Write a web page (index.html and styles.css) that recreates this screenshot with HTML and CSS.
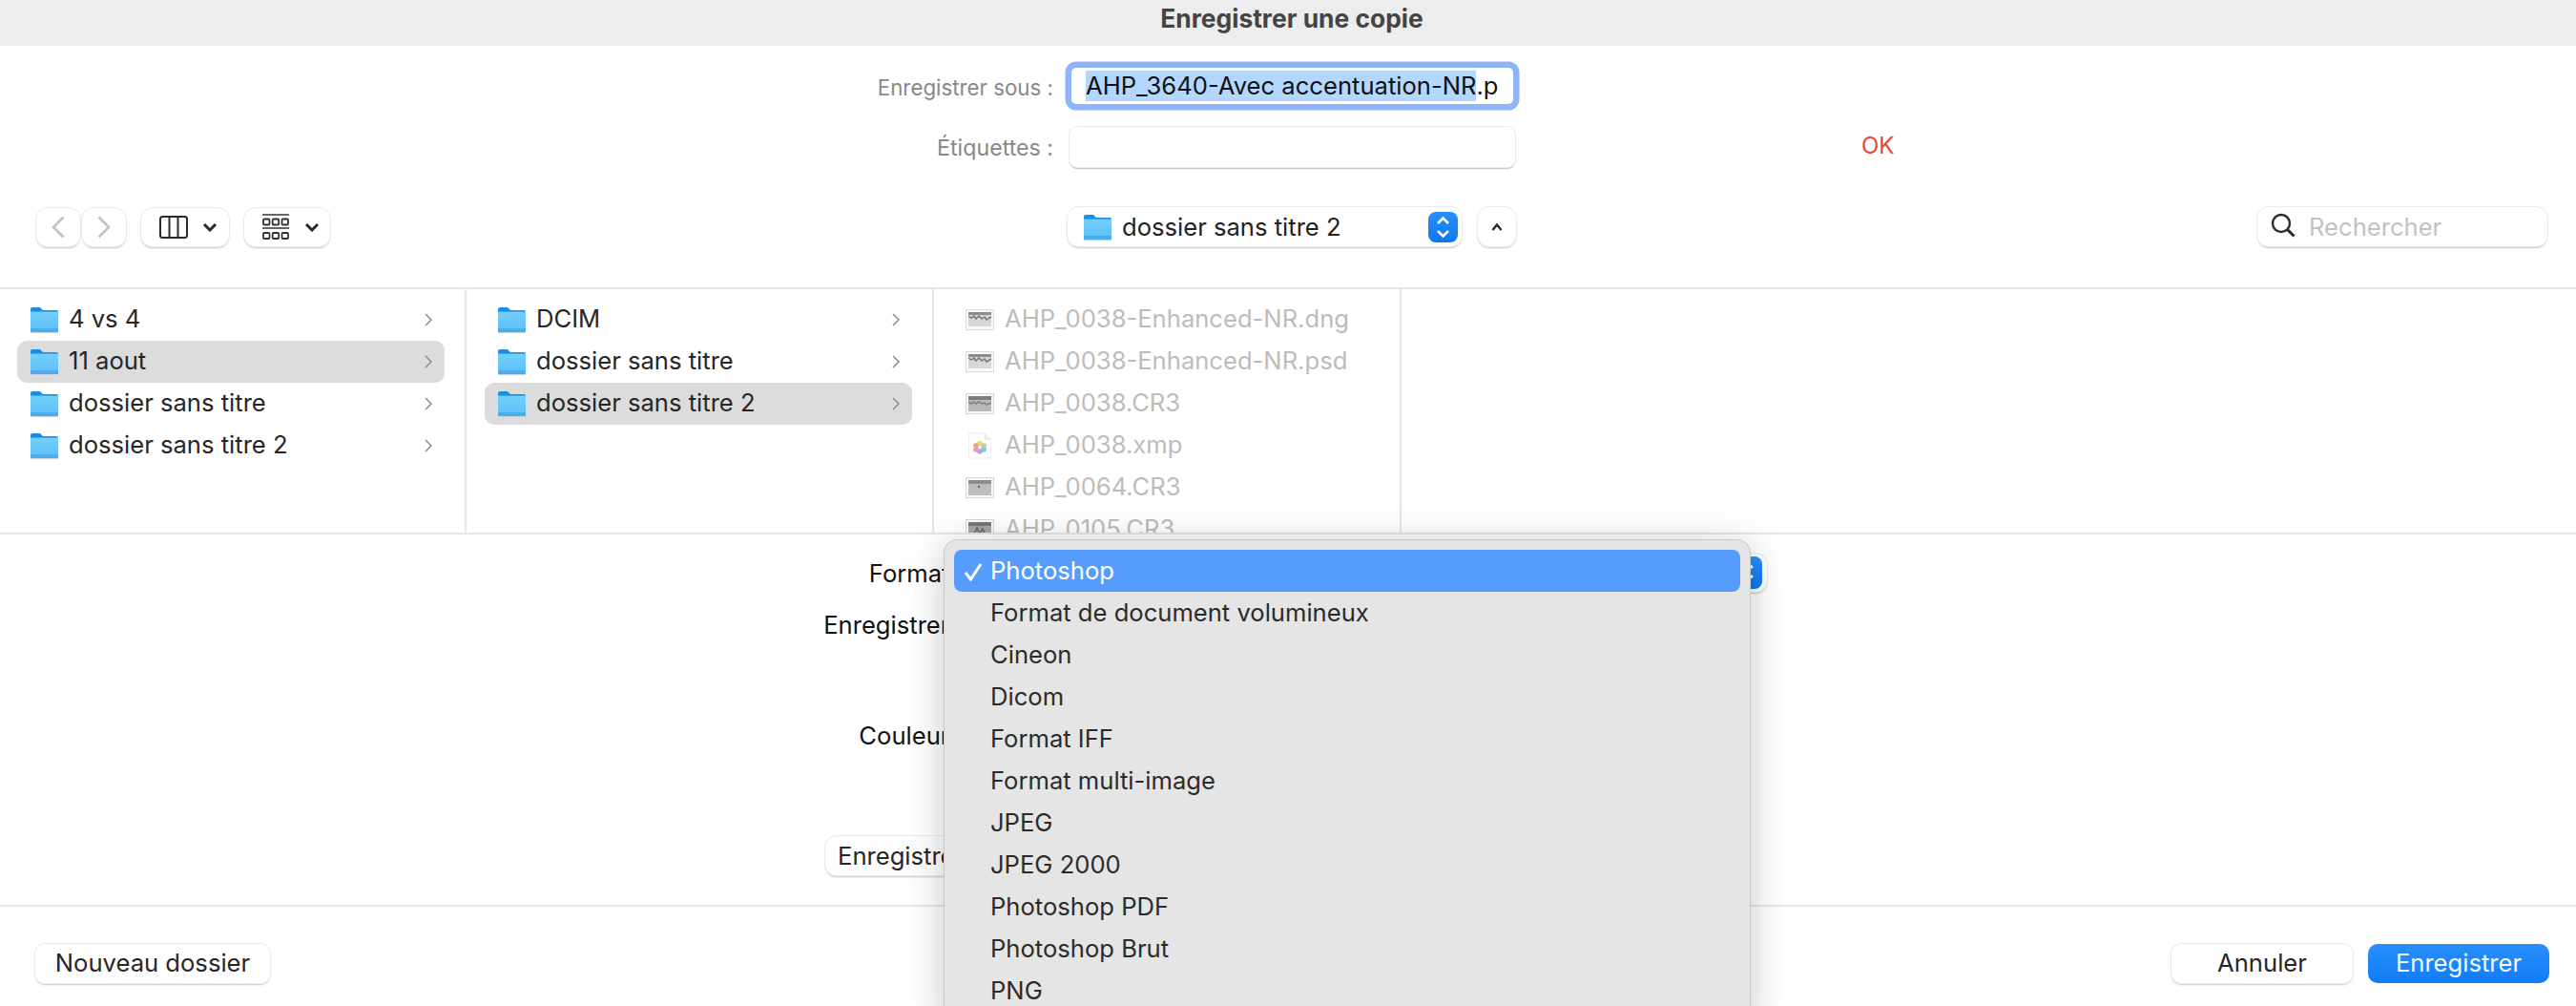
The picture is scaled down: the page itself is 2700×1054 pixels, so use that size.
FILE: index.html
```html
<!DOCTYPE html>
<html lang="fr">
<head>
<meta charset="utf-8">
<title>Enregistrer une copie</title>
<link rel="stylesheet" href="styles.css">
</head>
<body>
<svg class="sprite" aria-hidden="true">
  <defs>
    <linearGradient id="fb" x1="0" y1="0" x2="0" y2="1"><stop offset="0" stop-color="#74d0fd"/><stop offset="1" stop-color="#5cbdf7"/></linearGradient>
    <symbol id="folder" viewBox="0 0 29 28">
      <path d="M0 3a2 2 0 0 1 2-2h8l3 3h14a2 2 0 0 1 2 2v6H0z" fill="#1b8de2"/>
      <rect x="0" y="5" width="29" height="22" rx="1.5" fill="url(#fb)"/>
      <rect x="0" y="5" width="29" height="1" fill="#3ba8ec"/>
      <path d="M0 23h29v2.5a1.5 1.5 0 0 1-1.5 1.5h-26A1.5 1.5 0 0 1 0 25.500z" fill="#4bade9"/>
      <rect x="0" y="27" width="29" height="1" fill="#c9d4dc"/>
    </symbol>
    <symbol id="chev" viewBox="0 0 8 14"><path d="M1 1l6 6-6 6" fill="none" stroke="#8a8a8a" stroke-width="1.500"/></symbol>
    <symbol id="thumb-a" viewBox="0 0 30 22">
      <rect x=".5" y=".5" width="29" height="21" fill="#fafafa" stroke="#dcdcdc"/>
      <rect x="3" y="3" width="24" height="15" fill="#d8d8d8"/>
      <rect x="3" y="3" width="24" height="3" fill="#8c8c8c"/>
      <path d="M3 7l3 2 3-2 2 3 3-3 3 3 3-2 2 3 5-3" fill="none" stroke="#777" stroke-width="1.500"/>
    </symbol>
    <symbol id="thumb-b" viewBox="0 0 30 22">
      <rect x=".5" y=".5" width="29" height="21" fill="#fafafa" stroke="#d6d6d6"/>
      <rect x="3" y="3" width="24" height="16" fill="#b8b8b8"/>
      <rect x="3" y="3" width="24" height="4" fill="#7e7e7e"/>
      <path d="M3 9l3 2 3-2 2 2 3-2 3 2 3-1 2 2 5-2" fill="none" stroke="#808080" stroke-width="1.500"/>
    </symbol>
    <symbol id="thumb-c" viewBox="0 0 30 22">
      <rect x=".5" y=".5" width="29" height="21" fill="#fafafa" stroke="#d6d6d6"/>
      <rect x="3" y="3" width="24" height="16" fill="#bdbdbd"/>
      <rect x="3" y="3" width="24" height="4" fill="#8d8d8d"/>
      <circle cx="14" cy="10" r="1.200" fill="#6a6a6a"/>
    </symbol>
    <symbol id="thumb-d" viewBox="0 0 30 22">
      <rect x=".5" y=".5" width="29" height="21" fill="#fafafa" stroke="#d6d6d6"/>
      <rect x="3" y="3" width="24" height="16" fill="#a6a6a6"/>
      <rect x="3" y="3" width="24" height="4" fill="#777"/>
      <path d="M8 19l4-10 3 6 3-5 4 9" fill="none" stroke="#666" stroke-width="1.500"/>
    </symbol>
    <symbol id="doc" viewBox="0 0 26 28">
      <path d="M1.500 1h17l6 6v20h-23z" fill="#fdfdfd" stroke="#eeeeee"/>
      <path d="M18.500 1v6h6" fill="#f1f1f1" stroke="#e4e4e4"/>
      <g opacity=".8">
        <circle cx="13" cy="11.500" r="2.800" fill="#f4c45e"/>
        <circle cx="17" cy="14" r="2.800" fill="#a5cf74"/>
        <circle cx="17" cy="18" r="2.800" fill="#6cb7e4"/>
        <circle cx="13" cy="20" r="2.800" fill="#9b8fdc"/>
        <circle cx="9" cy="18" r="2.800" fill="#e284b8"/>
        <circle cx="9" cy="14" r="2.800" fill="#ef8a67"/>
      </g>
    </symbol>
    <symbol id="updown" viewBox="0 0 31 32">
      <path d="M10 12l5.500-5.500L21 12M10 20l5.500 5.500L21 20" fill="none" stroke="#fff" stroke-width="2.600"/>
    </symbol>
  </defs>
</svg>

<div class="dialog">
  <header class="titlebar">Enregistrer une copie</header>

  <section class="form">
    <label class="form-label form-label-first">Enregistrer sous :</label>
    <div class="name-field"><span class="selected">AHP_3640-Avec accentuation-NR</span>.p</div>
    <div></div>
    <label class="form-label form-label-second">Étiquettes :</label>
    <div class="tag-field"></div>
    <div class="ok">OK</div>
  </section>

  <section class="toolbar">
    <div class="tool-left">
      <div class="btn nav-btn"><svg class="nav-icon" viewBox="0 0 14 24"><path d="M12.500 1.500L2 12l10.500 10.500" fill="none" stroke="#c2c2c2" stroke-width="2.600"/></svg></div>
      <div class="btn nav-btn nav-next"><svg class="nav-icon" viewBox="0 0 14 24"><path d="M1.500 1.500L12 12 1.500 22.500" fill="none" stroke="#c2c2c2" stroke-width="2.600"/></svg></div>
      <div class="btn menu-btn view-btn">
        <svg class="view-icon" viewBox="0 0 30 24"><rect x="1" y="1" width="28" height="22" rx="2.500" fill="none" stroke="#2a2a2a" stroke-width="2"/><path d="M10.500 1v22M19.500 1v22" stroke="#2a2a2a" stroke-width="2"/></svg>
        <svg class="mini-chev" viewBox="0 0 16 10"><path d="M2 2l6 6 6-6" fill="none" stroke="#2a2a2a" stroke-width="3"/></svg>
      </div>
      <div class="btn menu-btn group-btn">
        <svg class="group-icon" viewBox="0 0 28 28">
          <path d="M0 1h28M0 15h28" stroke="#333" stroke-width="1.600"/>
          <g fill="none" stroke="#333" stroke-width="1.800">
            <rect x="1" y="5.500" width="6.500" height="6" rx="1"/><rect x="10.700" y="5.500" width="6.500" height="6" rx="1"/><rect x="20.500" y="5.500" width="6.500" height="6" rx="1"/>
            <rect x="1" y="20" width="6.500" height="6" rx="1"/><rect x="10.700" y="20" width="6.500" height="6" rx="1"/><rect x="20.500" y="20" width="6.500" height="6" rx="1"/>
          </g>
        </svg>
        <svg class="mini-chev" viewBox="0 0 16 10"><path d="M2 2l6 6 6-6" fill="none" stroke="#2a2a2a" stroke-width="3"/></svg>
      </div>
    </div>
    <div class="tool-center">
      <div class="btn location">
        <svg class="loc-folder"><use href="#folder"/></svg>
        <span class="loc-text">dossier sans titre 2</span>
        <span class="stepper"><svg class="stepper-icon"><use href="#updown"/></svg></span>
      </div>
      <div class="btn up-btn"><svg class="up-icon" viewBox="0 0 12 10"><path d="M1.500 8L6 2.500 10.500 8" fill="none" stroke="#2a2a2a" stroke-width="2.400"/></svg></div>
    </div>
    <div class="search">
      <svg class="search-icon" viewBox="0 0 26 26"><circle cx="11" cy="11" r="9" fill="none" stroke="#2a2a2a" stroke-width="2.400"/><path d="M17.500 17.500l7 7" stroke="#2a2a2a" stroke-width="3"/></svg>
      <span>Rechercher</span>
    </div>
  </section>

  <section class="browser">
    <div class="column">
      <div class="row"><svg class="folder"><use href="#folder"/></svg><span class="name">4 vs 4</span><svg class="chev"><use href="#chev"/></svg></div>
      <div class="row row-selected"><svg class="folder"><use href="#folder"/></svg><span class="name">11 aout</span><svg class="chev"><use href="#chev"/></svg></div>
      <div class="row"><svg class="folder"><use href="#folder"/></svg><span class="name">dossier sans titre</span><svg class="chev"><use href="#chev"/></svg></div>
      <div class="row"><svg class="folder"><use href="#folder"/></svg><span class="name">dossier sans titre 2</span><svg class="chev"><use href="#chev"/></svg></div>
    </div>
    <div class="column">
      <div class="row"><svg class="folder"><use href="#folder"/></svg><span class="name">DCIM</span><svg class="chev"><use href="#chev"/></svg></div>
      <div class="row"><svg class="folder"><use href="#folder"/></svg><span class="name">dossier sans titre</span><svg class="chev"><use href="#chev"/></svg></div>
      <div class="row row-selected"><svg class="folder"><use href="#folder"/></svg><span class="name">dossier sans titre 2</span><svg class="chev"><use href="#chev"/></svg></div>
    </div>
    <div class="column column-files">
      <div class="row row-file"><svg class="thumb"><use href="#thumb-a"/></svg><span class="file-name">AHP_0038-Enhanced-NR.dng</span></div>
      <div class="row row-file"><svg class="thumb"><use href="#thumb-a"/></svg><span class="file-name">AHP_0038-Enhanced-NR.psd</span></div>
      <div class="row row-file"><svg class="thumb"><use href="#thumb-b"/></svg><span class="file-name">AHP_0038.CR3</span></div>
      <div class="row row-file"><svg class="thumb-doc"><use href="#doc"/></svg><span class="file-name">AHP_0038.xmp</span></div>
      <div class="row row-file"><svg class="thumb"><use href="#thumb-c"/></svg><span class="file-name">AHP_0064.CR3</span></div>
      <div class="row row-file"><svg class="thumb"><use href="#thumb-d"/></svg><span class="file-name">AHP_0105.CR3</span></div>
    </div>
    <div class="column column-empty"></div>
  </section>

  <section class="options">
    <div class="opt-row opt-format">
      <div class="opt-label">Format :</div>
      <div class="btn format-popup"><span class="stepper format-stepper"><svg class="stepper-icon"><use href="#updown"/></svg></span></div>
    </div>
    <div class="opt-row opt-save"><div class="opt-label">Enregistrer :</div></div>
    <div class="opt-row opt-color"><div class="opt-label">Couleur :</div></div>
    <div class="btn opt-button">Enregistrer</div>
  </section>

  <footer class="footer">
    <div class="btn foot-btn new-folder">Nouveau dossier</div>
    <div class="foot-right">
      <div class="btn foot-btn cancel">Annuler</div>
      <div class="foot-btn save">Enregistrer</div>
    </div>
  </footer>

  <div class="menu">
    <div class="item item-active"><svg class="check" viewBox="0 0 20 20"><path d="M2 11l5.500 7L18 2" fill="none" stroke="#fff" stroke-width="3"/></svg>Photoshop</div>
    <div class="item">Format de document volumineux</div>
    <div class="item">Cineon</div>
    <div class="item">Dicom</div>
    <div class="item">Format IFF</div>
    <div class="item">Format multi-image</div>
    <div class="item">JPEG</div>
    <div class="item">JPEG 2000</div>
    <div class="item">Photoshop PDF</div>
    <div class="item">Photoshop Brut</div>
    <div class="item">PNG</div>
  </div>
</div>
</body>
</html>
```
FILE: styles.css
```css
* { box-sizing: border-box; }
html, body { margin: 0; height: 100%; overflow: hidden; background: #fff; }
body { font-family: Inter, "Liberation Sans", sans-serif; font-size: 25.600px; color: #262626; }
.sprite { position: absolute; width: 0; height: 0; }

.dialog { position: relative; display: flex; flex-direction: column; height: 1054px; overflow: hidden; }

.titlebar { height: 48px; flex: none; background: #ededed; color: #444; font-weight: 700; font-size: 26.400px; line-height: 39px; text-align: center; padding-left: 8px; }

.btn { background: #fff; border-radius: 12px; box-shadow: 0 0 0 1px #ececec, 0 2px 2px rgba(0,0,0,.22); }

.form { flex: none; display: grid; grid-template-columns: 1104px 467px 1fr; column-gap: 17px; row-gap: 17px; padding-top: 16px; padding-bottom: 42px; align-items: center; }
.form-label { text-align: right; color: #888; font-size: 22.300px; }
.form-label-first { padding-top: 2px; }
.form-label-second { padding-top: 2px; font-size: 23.200px; }
.name-field { height: 38px; margin: 7px 2px; background: #fff; border-radius: 5px; box-shadow: 0 0 0 6.500px #8fb5f8; padding-left: 15px; line-height: 38px; white-space: nowrap; overflow: hidden; color: #111; }
.selected { background: #b3d7ff; display: inline-block; line-height: 32px; height: 32px; }
.tag-field { height: 42px; background: #fff; border-radius: 8px; box-shadow: 0 0 0 1px #ececec, 0 2px 1px rgba(0,0,0,.25); }
.ok { padding-left: 346px; color: #e4463f; font-size: 24px; margin-top: -3px; }

.toolbar { flex: none; display: grid; grid-template-columns: 1fr auto 1fr; padding: 0 30px 43px 38px; height: 84px; }
.tool-left { display: flex; height: 40px; margin-top: 1px; }
.nav-btn { width: 46px; height: 40px; display: flex; align-items: center; justify-content: center; }
.nav-next { margin-left: 2px; }
.nav-icon { width: 14px; height: 24px; }
.menu-btn { height: 40px; display: flex; align-items: center; }
.view-btn { width: 92px; margin-left: 16px; padding-left: 19px; }
.group-btn { width: 90px; margin-left: 16px; padding-left: 19px; }
.view-icon { width: 30px; height: 24px; flex: none; }
.group-icon { width: 28px; height: 28px; flex: none; }
.mini-chev { width: 16px; height: 10px; margin-left: 15px; flex: none; }
.group-btn .mini-chev { margin-left: 16px; }

.tool-center { display: flex; gap: 17px; height: 41px; }
.location { width: 413px; height: 41px; display: flex; align-items: center; padding-left: 17px; position: relative; }
.loc-folder { width: 29px; height: 28px; flex: none; }
.loc-text { margin-left: 11px; flex: 1; color: #222; }
.stepper { width: 31px; height: 32px; margin-right: 4px; border-radius: 8px; background: linear-gradient(#2a8ffb, #0a78f2); display: block; flex: none; }
.stepper-icon { width: 31px; height: 32px; display: block; }
.up-btn { width: 40px; height: 41px; display: flex; align-items: center; justify-content: center; }
.up-icon { width: 12px; height: 10px; }

.search { justify-self: end; width: 304px; height: 41px; background: #fff; border-radius: 12px; box-shadow: 0 0 0 1px #ececec, 0 2px 1px rgba(0,0,0,.22); display: flex; align-items: center; padding-left: 14px; color: #c2c2c2; }
.search-icon { width: 26px; height: 26px; margin-right: 14px; margin-top: -3px; flex: none; }

.browser { flex: none; height: 259px; display: flex; border-top: 2px solid #e6e6e6; border-bottom: 2px solid #e6e6e6; overflow: hidden; }
.column { width: 489px; flex: none; border-right: 2px solid #e6e6e6; padding-top: 10px; overflow: hidden; }
.column-files { width: 490px; }
.column-empty { flex: 1; border-right: 0; }
.row { height: 44px; display: flex; align-items: center; margin-left: 18px; margin-right: 21px; padding-left: 14px; padding-right: 13px; border-radius: 10px; }
.column + .column .row { margin-left: 19px; margin-right: 21px; }
.column + .column { width: 490px; }
.column + .column.column-files { width: 490px; }
.column-empty.column { width: auto; }
.row-selected { background: #dcdcdc; }
.folder { width: 29px; height: 28px; flex: none; }
.name { margin-left: 11px; margin-top: -3px; flex: 1; color: #262626; white-space: nowrap; }
.chev { width: 8px; height: 14px; flex: none; }
.row-file { color: #bcbcbc; padding-left: 14px; }
.file-name { margin-top: -3px; }
.column + .column.column-files .row-file { margin-left: 19px; }
.thumb { width: 30px; height: 22px; margin-right: 11px; flex: none; }
.thumb-doc { width: 26px; height: 28px; margin-left: 2px; margin-right: 13px; flex: none; }

.options { flex: 1; position: relative; padding-top: 20px; }
.opt-row { display: flex; align-items: center; height: 40px; }
.opt-label { width: 1010px; text-align: right; color: #111; flex: none; white-space: nowrap; }
.opt-save { margin-top: 14px; }
.opt-color { margin-top: 76px; }
.format-popup { width: 835px; height: 40px; margin-left: 7px; display: flex; align-items: center; justify-content: flex-end; }
.format-stepper { margin-right: 5px; height: 34px; width: 31px; }
.opt-button { width: 260px; height: 41px; margin-top: 86px; margin-left: 865px; line-height: 41px; padding-left: 13px; white-space: nowrap; overflow: hidden; }

.footer { flex: none; height: 106px; border-top: 2px solid #e6e6e6; display: flex; justify-content: space-between; padding: 39px 28px 0 37px; }
.foot-btn { height: 41px; line-height: 39px; text-align: center; border-radius: 10px; color: #262626; }
.new-folder { width: 246px; }
.foot-right { display: flex; gap: 16px; }
.cancel { width: 190px; }
.save { width: 190px; background: linear-gradient(#2a8ffc, #0f7cf7); color: #f4f9ff; }

.menu { position: absolute; left: 989px; top: 565px; width: 846px; height: 520px; background: #e4e5e4; border: 1px solid #c9c9c9; border-radius: 14px; padding: 10px 10px 0; box-shadow: 0 6px 40px rgba(0,0,0,.22); }
.item { height: 44px; line-height: 43px; padding-left: 38px; color: #2b2b2b; position: relative; white-space: nowrap; }
.item-active { background: #569cfd; color: #fff; border-radius: 8px; }
.check { position: absolute; left: 10px; top: 13px; width: 20px; height: 20px; }
```
